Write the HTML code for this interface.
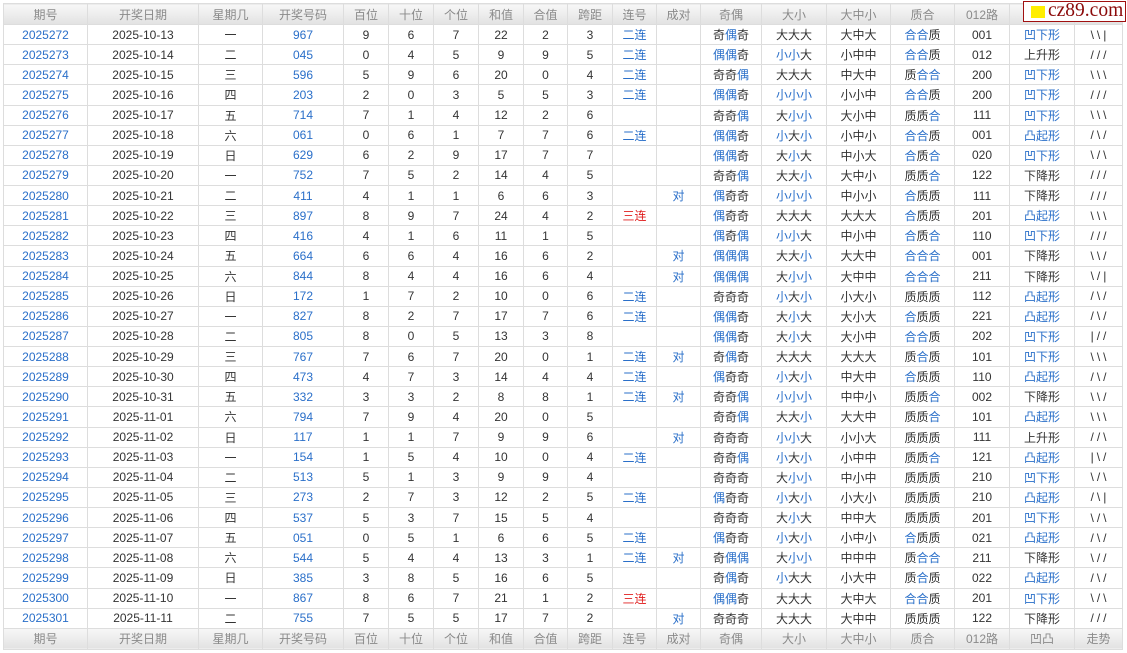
<!DOCTYPE html>
<html><head><meta charset="utf-8"><style>
body{margin:0;background:#fff;width:1127px;height:653px;overflow:hidden;position:relative;font-family:"Liberation Sans","Noto Sans CJK SC",sans-serif;}
table{position:absolute;left:3px;top:3px;border-collapse:collapse;table-layout:fixed;width:1119px;font-size:12px;color:#333;}
td,th{border:1px solid #ddd;text-align:center;padding:0;white-space:nowrap;overflow:hidden;}
th{font-weight:normal;color:#8a8a8a;background:linear-gradient(#f7f7f7,#e2e2e2);height:20px;font-size:12px}
tbody tr{height:20.13px}
b{font-weight:normal;color:#2a6fc9}
.b{color:#2a6fc9}.r{color:#e02020}
td.s{letter-spacing:3px;text-indent:3px}
#logo{position:absolute;left:1023px;top:1px;width:101px;height:19px;border:1.5px solid #a01010;background:#fff;}
#logo i{position:absolute;left:7px;top:4px;width:14px;height:12px;background:#ffee00}
#logo span{position:absolute;left:24px;top:-2px;font-family:"Liberation Serif",serif;font-size:19.5px;color:#8b0a0a;}
</style></head><body>
<table>
<colgroup><col style="width:84px"><col style="width:111px"><col style="width:64px"><col style="width:81px"><col style="width:45px"><col style="width:45px"><col style="width:45px"><col style="width:45px"><col style="width:44px"><col style="width:45px"><col style="width:44px"><col style="width:44px"><col style="width:61px"><col style="width:65px"><col style="width:64px"><col style="width:64px"><col style="width:55px"><col style="width:65px"><col style="width:48px"></colgroup>
<thead><tr><th>期号</th><th>开奖日期</th><th>星期几</th><th>开奖号码</th><th>百位</th><th>十位</th><th>个位</th><th>和值</th><th>合值</th><th>跨距</th><th>连号</th><th>成对</th><th>奇偶</th><th>大小</th><th>大中小</th><th>质合</th><th>012路</th><th>凹凸</th><th>走势</th></tr></thead>
<tbody>
<tr><td class="b">2025272</td><td>2025-10-13</td><td>一</td><td class="b">967</td><td>9</td><td>6</td><td>7</td><td>22</td><td>2</td><td>3</td><td class="b">二连</td><td></td><td>奇<b>偶</b>奇</td><td>大大大</td><td>大中大</td><td><b>合合</b>质</td><td>001</td><td class="b">凹下形</td><td class="s">\\|</td></tr>
<tr><td class="b">2025273</td><td>2025-10-14</td><td>二</td><td class="b">045</td><td>0</td><td>4</td><td>5</td><td>9</td><td>9</td><td>5</td><td class="b">二连</td><td></td><td><b>偶偶</b>奇</td><td><b>小小</b>大</td><td>小中中</td><td><b>合合</b>质</td><td>012</td><td>上升形</td><td class="s">///</td></tr>
<tr><td class="b">2025274</td><td>2025-10-15</td><td>三</td><td class="b">596</td><td>5</td><td>9</td><td>6</td><td>20</td><td>0</td><td>4</td><td class="b">二连</td><td></td><td>奇奇<b>偶</b></td><td>大大大</td><td>中大中</td><td>质<b>合合</b></td><td>200</td><td class="b">凹下形</td><td class="s">\\\</td></tr>
<tr><td class="b">2025275</td><td>2025-10-16</td><td>四</td><td class="b">203</td><td>2</td><td>0</td><td>3</td><td>5</td><td>5</td><td>3</td><td class="b">二连</td><td></td><td><b>偶偶</b>奇</td><td><b>小小小</b></td><td>小小中</td><td><b>合合</b>质</td><td>200</td><td class="b">凹下形</td><td class="s">///</td></tr>
<tr><td class="b">2025276</td><td>2025-10-17</td><td>五</td><td class="b">714</td><td>7</td><td>1</td><td>4</td><td>12</td><td>2</td><td>6</td><td></td><td></td><td>奇奇<b>偶</b></td><td>大<b>小小</b></td><td>大小中</td><td>质质<b>合</b></td><td>111</td><td class="b">凹下形</td><td class="s">\\\</td></tr>
<tr><td class="b">2025277</td><td>2025-10-18</td><td>六</td><td class="b">061</td><td>0</td><td>6</td><td>1</td><td>7</td><td>7</td><td>6</td><td class="b">二连</td><td></td><td><b>偶偶</b>奇</td><td><b>小</b>大<b>小</b></td><td>小中小</td><td><b>合合</b>质</td><td>001</td><td class="b">凸起形</td><td class="s">/\/</td></tr>
<tr><td class="b">2025278</td><td>2025-10-19</td><td>日</td><td class="b">629</td><td>6</td><td>2</td><td>9</td><td>17</td><td>7</td><td>7</td><td></td><td></td><td><b>偶偶</b>奇</td><td>大<b>小</b>大</td><td>中小大</td><td><b>合</b>质<b>合</b></td><td>020</td><td class="b">凹下形</td><td class="s">\/\</td></tr>
<tr><td class="b">2025279</td><td>2025-10-20</td><td>一</td><td class="b">752</td><td>7</td><td>5</td><td>2</td><td>14</td><td>4</td><td>5</td><td></td><td></td><td>奇奇<b>偶</b></td><td>大大<b>小</b></td><td>大中小</td><td>质质<b>合</b></td><td>122</td><td>下降形</td><td class="s">///</td></tr>
<tr><td class="b">2025280</td><td>2025-10-21</td><td>二</td><td class="b">411</td><td>4</td><td>1</td><td>1</td><td>6</td><td>6</td><td>3</td><td></td><td class="b">对</td><td><b>偶</b>奇奇</td><td><b>小小小</b></td><td>中小小</td><td><b>合</b>质质</td><td>111</td><td>下降形</td><td class="s">///</td></tr>
<tr><td class="b">2025281</td><td>2025-10-22</td><td>三</td><td class="b">897</td><td>8</td><td>9</td><td>7</td><td>24</td><td>4</td><td>2</td><td class="r">三连</td><td></td><td><b>偶</b>奇奇</td><td>大大大</td><td>大大大</td><td><b>合</b>质质</td><td>201</td><td class="b">凸起形</td><td class="s">\\\</td></tr>
<tr><td class="b">2025282</td><td>2025-10-23</td><td>四</td><td class="b">416</td><td>4</td><td>1</td><td>6</td><td>11</td><td>1</td><td>5</td><td></td><td></td><td><b>偶</b>奇<b>偶</b></td><td><b>小小</b>大</td><td>中小中</td><td><b>合</b>质<b>合</b></td><td>110</td><td class="b">凹下形</td><td class="s">///</td></tr>
<tr><td class="b">2025283</td><td>2025-10-24</td><td>五</td><td class="b">664</td><td>6</td><td>6</td><td>4</td><td>16</td><td>6</td><td>2</td><td></td><td class="b">对</td><td><b>偶偶偶</b></td><td>大大<b>小</b></td><td>大大中</td><td><b>合合合</b></td><td>001</td><td>下降形</td><td class="s">\\/</td></tr>
<tr><td class="b">2025284</td><td>2025-10-25</td><td>六</td><td class="b">844</td><td>8</td><td>4</td><td>4</td><td>16</td><td>6</td><td>4</td><td></td><td class="b">对</td><td><b>偶偶偶</b></td><td>大<b>小小</b></td><td>大中中</td><td><b>合合合</b></td><td>211</td><td>下降形</td><td class="s">\/|</td></tr>
<tr><td class="b">2025285</td><td>2025-10-26</td><td>日</td><td class="b">172</td><td>1</td><td>7</td><td>2</td><td>10</td><td>0</td><td>6</td><td class="b">二连</td><td></td><td>奇奇奇</td><td><b>小</b>大<b>小</b></td><td>小大小</td><td>质质质</td><td>112</td><td class="b">凸起形</td><td class="s">/\/</td></tr>
<tr><td class="b">2025286</td><td>2025-10-27</td><td>一</td><td class="b">827</td><td>8</td><td>2</td><td>7</td><td>17</td><td>7</td><td>6</td><td class="b">二连</td><td></td><td><b>偶偶</b>奇</td><td>大<b>小</b>大</td><td>大小大</td><td><b>合</b>质质</td><td>221</td><td class="b">凸起形</td><td class="s">/\/</td></tr>
<tr><td class="b">2025287</td><td>2025-10-28</td><td>二</td><td class="b">805</td><td>8</td><td>0</td><td>5</td><td>13</td><td>3</td><td>8</td><td></td><td></td><td><b>偶偶</b>奇</td><td>大<b>小</b>大</td><td>大小中</td><td><b>合合</b>质</td><td>202</td><td class="b">凹下形</td><td class="s">|//</td></tr>
<tr><td class="b">2025288</td><td>2025-10-29</td><td>三</td><td class="b">767</td><td>7</td><td>6</td><td>7</td><td>20</td><td>0</td><td>1</td><td class="b">二连</td><td class="b">对</td><td>奇<b>偶</b>奇</td><td>大大大</td><td>大大大</td><td>质<b>合</b>质</td><td>101</td><td class="b">凹下形</td><td class="s">\\\</td></tr>
<tr><td class="b">2025289</td><td>2025-10-30</td><td>四</td><td class="b">473</td><td>4</td><td>7</td><td>3</td><td>14</td><td>4</td><td>4</td><td class="b">二连</td><td></td><td><b>偶</b>奇奇</td><td><b>小</b>大<b>小</b></td><td>中大中</td><td><b>合</b>质质</td><td>110</td><td class="b">凸起形</td><td class="s">/\/</td></tr>
<tr><td class="b">2025290</td><td>2025-10-31</td><td>五</td><td class="b">332</td><td>3</td><td>3</td><td>2</td><td>8</td><td>8</td><td>1</td><td class="b">二连</td><td class="b">对</td><td>奇奇<b>偶</b></td><td><b>小小小</b></td><td>中中小</td><td>质质<b>合</b></td><td>002</td><td>下降形</td><td class="s">\\/</td></tr>
<tr><td class="b">2025291</td><td>2025-11-01</td><td>六</td><td class="b">794</td><td>7</td><td>9</td><td>4</td><td>20</td><td>0</td><td>5</td><td></td><td></td><td>奇奇<b>偶</b></td><td>大大<b>小</b></td><td>大大中</td><td>质质<b>合</b></td><td>101</td><td class="b">凸起形</td><td class="s">\\\</td></tr>
<tr><td class="b">2025292</td><td>2025-11-02</td><td>日</td><td class="b">117</td><td>1</td><td>1</td><td>7</td><td>9</td><td>9</td><td>6</td><td></td><td class="b">对</td><td>奇奇奇</td><td><b>小小</b>大</td><td>小小大</td><td>质质质</td><td>111</td><td>上升形</td><td class="s">//\</td></tr>
<tr><td class="b">2025293</td><td>2025-11-03</td><td>一</td><td class="b">154</td><td>1</td><td>5</td><td>4</td><td>10</td><td>0</td><td>4</td><td class="b">二连</td><td></td><td>奇奇<b>偶</b></td><td><b>小</b>大<b>小</b></td><td>小中中</td><td>质质<b>合</b></td><td>121</td><td class="b">凸起形</td><td class="s">|\/</td></tr>
<tr><td class="b">2025294</td><td>2025-11-04</td><td>二</td><td class="b">513</td><td>5</td><td>1</td><td>3</td><td>9</td><td>9</td><td>4</td><td></td><td></td><td>奇奇奇</td><td>大<b>小小</b></td><td>中小中</td><td>质质质</td><td>210</td><td class="b">凹下形</td><td class="s">\/\</td></tr>
<tr><td class="b">2025295</td><td>2025-11-05</td><td>三</td><td class="b">273</td><td>2</td><td>7</td><td>3</td><td>12</td><td>2</td><td>5</td><td class="b">二连</td><td></td><td><b>偶</b>奇奇</td><td><b>小</b>大<b>小</b></td><td>小大小</td><td>质质质</td><td>210</td><td class="b">凸起形</td><td class="s">/\|</td></tr>
<tr><td class="b">2025296</td><td>2025-11-06</td><td>四</td><td class="b">537</td><td>5</td><td>3</td><td>7</td><td>15</td><td>5</td><td>4</td><td></td><td></td><td>奇奇奇</td><td>大<b>小</b>大</td><td>中中大</td><td>质质质</td><td>201</td><td class="b">凹下形</td><td class="s">\/\</td></tr>
<tr><td class="b">2025297</td><td>2025-11-07</td><td>五</td><td class="b">051</td><td>0</td><td>5</td><td>1</td><td>6</td><td>6</td><td>5</td><td class="b">二连</td><td></td><td><b>偶</b>奇奇</td><td><b>小</b>大<b>小</b></td><td>小中小</td><td><b>合</b>质质</td><td>021</td><td class="b">凸起形</td><td class="s">/\/</td></tr>
<tr><td class="b">2025298</td><td>2025-11-08</td><td>六</td><td class="b">544</td><td>5</td><td>4</td><td>4</td><td>13</td><td>3</td><td>1</td><td class="b">二连</td><td class="b">对</td><td>奇<b>偶偶</b></td><td>大<b>小小</b></td><td>中中中</td><td>质<b>合合</b></td><td>211</td><td>下降形</td><td class="s">\//</td></tr>
<tr><td class="b">2025299</td><td>2025-11-09</td><td>日</td><td class="b">385</td><td>3</td><td>8</td><td>5</td><td>16</td><td>6</td><td>5</td><td></td><td></td><td>奇<b>偶</b>奇</td><td><b>小</b>大大</td><td>小大中</td><td>质<b>合</b>质</td><td>022</td><td class="b">凸起形</td><td class="s">/\/</td></tr>
<tr><td class="b">2025300</td><td>2025-11-10</td><td>一</td><td class="b">867</td><td>8</td><td>6</td><td>7</td><td>21</td><td>1</td><td>2</td><td class="r">三连</td><td></td><td><b>偶偶</b>奇</td><td>大大大</td><td>大中大</td><td><b>合合</b>质</td><td>201</td><td class="b">凹下形</td><td class="s">\/\</td></tr>
<tr><td class="b">2025301</td><td>2025-11-11</td><td>二</td><td class="b">755</td><td>7</td><td>5</td><td>5</td><td>17</td><td>7</td><td>2</td><td></td><td class="b">对</td><td>奇奇奇</td><td>大大大</td><td>大中中</td><td>质质质</td><td>122</td><td>下降形</td><td class="s">///</td></tr>
</tbody>
<tfoot><tr><th>期号</th><th>开奖日期</th><th>星期几</th><th>开奖号码</th><th>百位</th><th>十位</th><th>个位</th><th>和值</th><th>合值</th><th>跨距</th><th>连号</th><th>成对</th><th>奇偶</th><th>大小</th><th>大中小</th><th>质合</th><th>012路</th><th>凹凸</th><th>走势</th></tr></tfoot>
</table>
<div id="logo"><i></i><span>cz89.com</span></div>
</body></html>
